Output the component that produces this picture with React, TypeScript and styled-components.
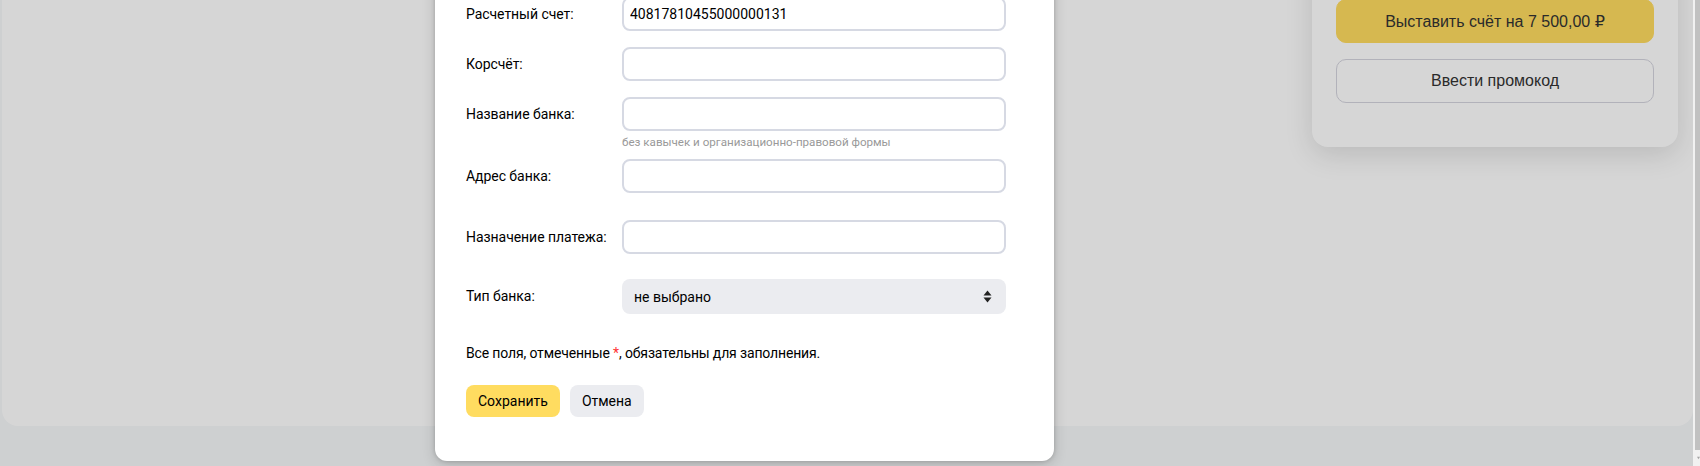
import * as React from 'react'
import styled, { createGlobalStyle } from 'styled-components'

const GlobalStyle = createGlobalStyle`
  html, body {
    margin: 0;
    padding: 0;
    overflow: hidden;
  }
  body {
    font-family: Roboto, 'Liberation Sans', Arial, sans-serif;
  }
  * {
    box-sizing: border-box;
  }
`

const Root = styled.div`
  position: relative;
  width: 1700px;
  height: 466px;
  overflow: hidden;
  display: flex;
  background: #f6f8fa;
`

const Main = styled.div`
  flex: 1;
  display: flex;
  flex-direction: column;
  padding: 0 0 40px 2px;
`

const Panel = styled.div`
  flex: 1;
  display: flex;
  justify-content: flex-end;
  align-items: flex-start;
  padding-right: 15px;
  background: #ffffff;
  border-radius: 0 0 16px 16px;
`

const SideCard = styled.div`
  width: 366px;
  margin-top: -60px;
  padding: 59px 24px 44px;
  display: flex;
  flex-direction: column;
  gap: 16px;
  background: #ffffff;
  border-radius: 0 0 16px 16px;
  box-shadow: 0 8px 28px rgba(0, 0, 0, 0.13);
`

const CardButton = styled.button<{ $primary?: boolean }>`
  height: 44px;
  border-radius: 10px;
  border: 1px solid ${({ $primary }) => ($primary ? '#ffdc60' : '#d4d4de')};
  background: ${({ $primary }) => ($primary ? '#ffdc60' : '#ffffff')};
  font-family: 'Liberation Sans', Arial, 'DejaVu Sans', sans-serif;
  font-size: 16px;
  color: #333333;
  padding: 0;
`

const Scrollbar = styled.div`
  width: 7px;
  display: flex;
  flex-direction: column;
  background: #f1f1f1;
  padding-left: 2px;
`

const Thumb = styled.div`
  flex: 1;
  background: #c1c1c1;
`

const ScrollArrow = styled.div`
  height: 16px;
  display: flex;
  align-items: center;
  padding-left: 2px;
`

const Overlay = styled.div`
  position: absolute;
  top: 0;
  left: 0;
  bottom: 0;
  right: 7px;
  background: rgba(0, 0, 0, 0.16);
`

const Modal = styled.form`
  position: absolute;
  left: 435px;
  top: -40px;
  width: 619px;
  padding: 37px 48px 44px 31px;
  background: #ffffff;
  border-radius: 12px;
  box-shadow: 0 0 4px rgba(0, 0, 0, 0.18), 0 4px 14px rgba(0, 0, 0, 0.16);
  font-size: 14px;
  color: #000000;
`

const FieldRow = styled.div<{ $top?: number }>`
  display: grid;
  grid-template-columns: 156px 384px;
  align-items: start;
  margin-top: ${({ $top }) => $top ?? 0}px;
`

const Label = styled.label<{ $h?: number }>`
  line-height: ${({ $h }) => $h ?? 34}px;
  white-space: nowrap;
  letter-spacing: -0.05px;
`

const Control = styled.div`
  display: flex;
  flex-direction: column;
`

const Input = styled.input`
  height: 34px;
  width: 100%;
  border: 2px solid #d6d9e3;
  border-radius: 8px;
  padding: 0 6px;
  font-family: inherit;
  font-size: 14px;
  color: #000000;
  background: #ffffff;
  outline: none;
`

const Hint = styled.div`
  margin-top: 4px;
  padding-left: 0;
  font-size: 11.6px;
  line-height: 14px;
  color: #999999;
  white-space: nowrap;
`

const Select = styled.div`
  height: 35px;
  display: flex;
  align-items: center;
  justify-content: space-between;
  padding: 0 14px 0 12px;
  background: #ebecf0;
  border-radius: 8px;
  color: #000000;
`

const Note = styled.p`
  margin: 29px 0 0;
  line-height: 20px;
  letter-spacing: -0.15px;
`

const Required = styled.span`
  color: #ff3333;
`

const Actions = styled.div`
  display: flex;
  gap: 10px;
  margin-top: 22px;
`

const FormButton = styled.button<{ $primary?: boolean }>`
  height: 32px;
  padding: 0 12px;
  border: none;
  border-radius: 8px;
  background: ${({ $primary }) => ($primary ? '#ffdc60' : '#ebecf0')};
  font-family: inherit;
  font-size: 14px;
  color: #000000;
`

const SortIcon = () => (
  <svg width="9" height="13" viewBox="0 0 9 13">
    <path d="M4.5 0.5 L8.5 5.5 L0.5 5.5 Z" fill="#222" />
    <path d="M4.5 12.5 L8.5 7.5 L0.5 7.5 Z" fill="#222" />
  </svg>
)

const fields = [
  { label: 'Расчетный счет:', value: '40817810455000000131', top: 0 },
  { label: 'Корсчёт:', value: '', top: 16 },
  { label: 'Название банка:', value: '', top: 16, hint: 'без кавычек и организационно-правовой формы' },
  { label: 'Адрес банка:', value: '', top: 10 },
  { label: 'Назначение платежа:', value: '', top: 27 },
]

export default function App() {
  return (
    <Root>
      <GlobalStyle />
      <Main>
        <Panel>
          <SideCard>
            <CardButton $primary>Выставить счёт на 7 500,00 ₽</CardButton>
            <CardButton>Ввести промокод</CardButton>
          </SideCard>
        </Panel>
      </Main>
      <Scrollbar>
        <Thumb />
        <ScrollArrow>
          <svg width="5" height="4" viewBox="0 0 5 4">
            <path d="M0 0 L5 0 L2.5 4 Z" fill="#a3a3a3" />
          </svg>
        </ScrollArrow>
      </Scrollbar>
      <Overlay />
      <Modal onSubmit={(e) => e.preventDefault()}>
        {fields.map((f) => (
          <FieldRow key={f.label} $top={f.top}>
            <Label>{f.label}</Label>
            <Control>
              <Input defaultValue={f.value} />
              {f.hint && <Hint>{f.hint}</Hint>}
            </Control>
          </FieldRow>
        ))}
        <FieldRow $top={25}>
          <Label $h={35}>Тип банка:</Label>
          <Select>
            <span>не выбрано</span>
            <SortIcon />
          </Select>
        </FieldRow>
        <Note>
          Все поля, отмеченные <Required>*</Required>, обязательны для заполнения.
        </Note>
        <Actions>
          <FormButton $primary type="submit">Сохранить</FormButton>
          <FormButton type="button">Отмена</FormButton>
        </Actions>
      </Modal>
    </Root>
  )
}
